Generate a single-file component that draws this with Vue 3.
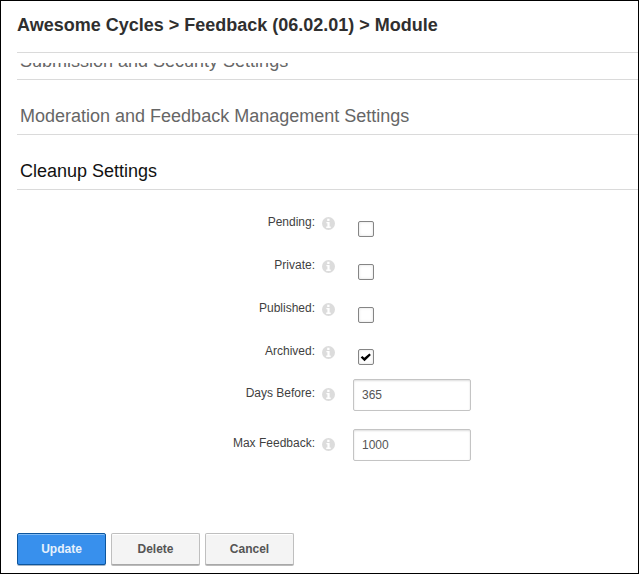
<script setup>
import { reactive } from 'vue'

const rows = reactive([
  { id: 'pending', label: 'Pending:', type: 'check', value: false },
  { id: 'private', label: 'Private:', type: 'check', value: false },
  { id: 'published', label: 'Published:', type: 'check', value: false },
  { id: 'archived', label: 'Archived:', type: 'check', value: true },
  { id: 'days', label: 'Days Before:', type: 'text', value: '365' },
  { id: 'max', label: 'Max Feedback:', type: 'text', value: '1000' },
])
</script>

<template>
  <main class="dialog">
    <h1 class="title"><span>Awesome Cycles &gt; Feedback (06.02.01) &gt; Module</span></h1>
    <section class="panel">
      <div class="clip">
        <h2 class="heading first"><span>Submission and Security Settings</span></h2>
      </div>
      <h2 class="heading"><span>Moderation and Feedback Management Settings</span></h2>
      <h2 class="heading active"><span>Cleanup Settings</span></h2>
      <form class="form" @submit.prevent>
        <div v-for="row in rows" :key="row.id" class="row" :class="[row.type, row.id]">
          <label class="label" :for="row.id">{{ row.label }}</label>
          <svg class="info" viewBox="0 0 13 13" width="13" height="13">
            <circle cx="6.5" cy="6.5" r="6.5" fill="#dcdcdc" />
            <path d="M5.2 1.8h2.3v2.2H5.2zM4.4 5h3.2v4.6h1.1V11H4.2V9.6h1.2V6.3h-1z" fill="#fff" />
          </svg>
          <label v-if="row.type === 'check'" class="box">
            <input :id="row.id" v-model="row.value" class="native" type="checkbox" />
            <svg v-if="row.value" viewBox="0 0 14 14" width="14" height="14">
              <path d="M1.7 7.4L3.3 6L5.3 7.8L10.4 3.5L11.9 4.9L5.5 11.2Z" fill="#000" />
            </svg>
          </label>
          <input v-else :id="row.id" v-model="row.value" class="field" type="text" />
        </div>
      </form>
    </section>
    <footer class="actions">
      <button class="btn primary" type="button">Update</button>
      <button class="btn" type="button">Delete</button>
      <button class="btn" type="button">Cancel</button>
    </footer>
  </main>
</template>

<style>
body {
  margin: 0;
  background: #fff;
}
</style>

<style scoped>
.dialog {
  box-sizing: border-box;
  width: 639px;
  height: 574px;
  padding-left: 16px;
  border: 1px solid #000;
  background: #fff;
  font-family: "Liberation Sans", Arial, sans-serif;
  overflow: hidden;
  display: flex;
  flex-direction: column;
}
.title {
  box-sizing: border-box;
  height: 52px;
  flex: none;
  margin: 0;
  padding-top: 13px;
  border-bottom: 1px solid #dadada;
  font-size: 18px;
  line-height: 22px;
  font-weight: bold;
  color: #2f2f2f;
  white-space: nowrap;
}
.panel {
  padding-top: 10px;
  height: 470px;
  box-sizing: border-box;
  flex: none;
}
.clip {
  height: 17px;
  overflow: hidden;
  display: flex;
  align-items: flex-end;
}
.heading {
  box-sizing: border-box;
  width: 100%;
  height: 55px;
  flex: none;
  margin: 0;
  padding: 25px 0 0 3px;
  border-bottom: 1px solid #dadada;
  font-size: 18px;
  line-height: 22px;
  font-weight: normal;
  color: #666;
  white-space: nowrap;
}
.heading.active {
  color: #111;
}
.form {
  padding-top: 17px;
}
.row {
  display: grid;
  grid-template-columns: 298px 13px 1fr;
  column-gap: 7px;
  align-items: start;
  height: 43px;
}
.row.archived {
  height: 42px;
}
.row.text {
  height: 50px;
}
.label {
  padding-top: 7px;
  font-size: 12px;
  line-height: 16px;
  color: #3f3f3f;
  text-align: right;
}
.info {
  display: block;
  margin-top: 10px;
}
.box {
  box-sizing: border-box;
  display: block;
  width: 16px;
  height: 16px;
  margin: 14px 0 0 16px;
  border: 1px solid #858585;
  border-radius: 2px;
  background: #fff;
  box-shadow: inset 0 0 3px #ddd;
}
.archived .box {
  margin-top: 13px;
}
.box svg {
  display: block;
}
.native {
  display: none;
}
.field {
  box-sizing: border-box;
  width: 118px;
  height: 32px;
  margin: 1px 0 0 11px;
  padding: 0 8px;
  border: 1px solid #c4c4c4;
  border-radius: 2px;
  box-shadow: inset 0 1px 2px #ddd;
  background: #fff;
  font: 12px/16px "Liberation Sans", Arial, sans-serif;
  color: #555;
  outline: none;
}
.actions {
  display: flex;
  gap: 5px;
  padding-top: 10px;
}
.btn {
  box-sizing: border-box;
  width: 89px;
  height: 32px;
  padding: 0;
  border: 1px solid #bfbfbf;
  border-bottom-color: #a8a8a8;
  border-radius: 2px;
  background: #f4f4f4;
  box-shadow: 0 1px 0 #bbb, inset 0 1px 0 #fff;
  font: bold 12px/16px "Liberation Sans", Arial, sans-serif;
  color: #555;
}
.btn.primary {
  border-color: #0d569e;
  background: #3890ed;
  box-shadow: 0 1px 0 #a5b4c4, inset 0 1px 0 #82bcf5;
  color: #e6f1fc;
}
</style>
